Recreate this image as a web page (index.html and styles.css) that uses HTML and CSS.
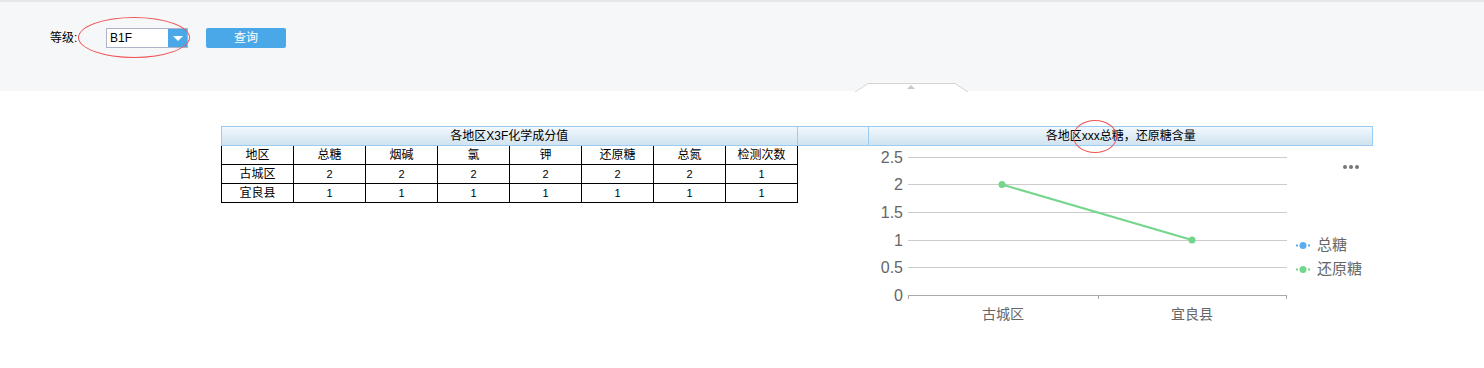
FILE: index.html
```html
<!DOCTYPE html>
<html lang="zh">
	<head>
		<meta charset="UTF-8" />
		<title>化学成分</title>
		<link rel="stylesheet" href="styles.css">
	</head>
	<body>
		<div class="query">
			<form action="" class="query-form">
				<label for="level">等级:</label>
				<div class="select">
					<span class="select-text">B1F</span>
					<span class="select-btn"></span>
				</div>
				<button type="button" class="btn">查询</button>
			</form>
			<span class="mark mark-select"></span>
			<svg class="toggle" width="116" height="10" viewBox="0 0 116 10">
				<path d="M1 10 L14 1.5 L101 1.5 L114 10" fill="#fff" stroke="#d4d4d4" stroke-width="1"/>
				<path d="M53 7 L57 3 L61 7 Z" fill="#c8c8c8"/>
			</svg>
		</div>
		<div class="content">
			<div class="titles">
				<div class="title t-table">各地区X3F化学成分值</div>
				<div class="title t-blank"></div>
				<div class="title t-chart">各地区xxx总糖，还原糖含量</div>
				<span class="mark mark-title"></span>
			</div>
			<div class="body">
				<table class="data">
					<tr><td>地区</td><td>总糖</td><td>烟碱</td><td>氯</td><td>钾</td><td>还原糖</td><td>总氮</td><td>检测次数</td></tr>
					<tr><td>古城区</td><td class="num">2</td><td class="num">2</td><td class="num">2</td><td class="num">2</td><td class="num">2</td><td class="num">2</td><td class="num">1</td></tr>
					<tr><td>宜良县</td><td class="num">1</td><td class="num">1</td><td class="num">1</td><td class="num">1</td><td class="num">1</td><td class="num">1</td><td class="num">1</td></tr>
				</table>
				<svg class="chart" width="504" height="190" viewBox="0 0 504 190">
					<g stroke="#ccc" stroke-width="1">
						<line x1="39" y1="11.5" x2="418" y2="11.5"/>
						<line x1="39" y1="38.5" x2="418" y2="38.5"/>
						<line x1="39" y1="66.5" x2="418" y2="66.5"/>
						<line x1="39" y1="94.5" x2="418" y2="94.5"/>
						<line x1="39" y1="121.5" x2="418" y2="121.5"/>
					</g>
					<g stroke="#aaa" stroke-width="1">
						<line x1="39" y1="149.5" x2="418" y2="149.5"/>
						<line x1="39.5" y1="149" x2="39.5" y2="153"/>
						<line x1="229.5" y1="149" x2="229.5" y2="153"/>
						<line x1="417.5" y1="149" x2="417.5" y2="153"/>
					</g>
					<g class="axis-y" text-anchor="end">
						<text x="34" y="17">2.5</text>
						<text x="34" y="44">2</text>
						<text x="34" y="72">1.5</text>
						<text x="34" y="100">1</text>
						<text x="34" y="127">0.5</text>
						<text x="34" y="155">0</text>
					</g>
					<g class="axis-x" text-anchor="middle">
						<text x="134" y="173">古城区</text>
						<text x="323" y="173">宜良县</text>
					</g>
					<polyline points="133,38.5 323,94" fill="none" stroke="#74d68c" stroke-width="2"/>
					<circle cx="133" cy="38.5" r="3.5" fill="#74d68c"/>
					<circle cx="323" cy="94" r="3.5" fill="#74d68c"/>
					<g fill="#777">
						<circle cx="476" cy="21" r="2"/>
						<circle cx="482" cy="21" r="2"/>
						<circle cx="488" cy="21" r="2"/>
					</g>
					<g class="legend">
						<line x1="427" y1="99.5" x2="441" y2="99.5" stroke="#5aaef0" stroke-width="2" stroke-dasharray="2 2"/>
						<circle cx="434" cy="99.5" r="3.5" fill="#5aaef0"/>
						<text x="448" y="104">总糖</text>
						<line x1="427" y1="123.5" x2="441" y2="123.5" stroke="#74d68c" stroke-width="2" stroke-dasharray="2 2"/>
						<circle cx="434" cy="123.5" r="3.5" fill="#74d68c"/>
						<text x="448" y="128">还原糖</text>
					</g>
				</svg>
			</div>
		</div>
	</body>
</html>
```

FILE: styles.css
```css
body{
	margin: 0;
	font: 12px/1.5 "Liberation Sans", "Noto Sans CJK SC", sans-serif;
	color: #000;
	background: #fff;
}
div.query{
	position: relative;
	height: 89px;
	border-top: 2px solid #e6e7eb;
	background: #f6f7f9;
}
form.query-form{
	display: flex;
	align-items: center;
	padding: 26px 0 0 50px;
}
form.query-form label{
	width: 56px;
}
div.select{
	display: flex;
	width: 80px;
	height: 18px;
	border: 1px solid #aeb3c8;
	background: #fff;
}
span.select-text{
	flex: 1;
	padding-left: 3px;
	line-height: 18px;
}
span.select-btn{
	position: relative;
	width: 19px;
	background: #4aa8e8;
}
span.select-btn:after{
	content: "";
	position: absolute;
	left: 5px;
	top: 7px;
	border: 5px solid transparent;
	border-top: 5px solid #fff;
	border-bottom: 0;
}
button.btn{
	margin-left: 18px;
	width: 80px;
	height: 20px;
	padding: 0;
	border: 0;
	border-radius: 2px;
	background: #4aa8e8;
	color: #fff;
	font: inherit;
	line-height: 20px;
}
span.mark{
	position: absolute;
	border: 1px solid #ee5555;
	border-radius: 50%;
}
span.mark-select{
	left: 78px;
	top: 15px;
	width: 110px;
	height: 39px;
}
svg.toggle{
	position: absolute;
	left: 854px;
	bottom: -1px;
}
div.content{
	width: 1152px;
	margin: 35px 0 0 221px;
}
div.titles{
	position: relative;
	display: flex;
	height: 20px;
}
div.title{
	height: 18px;
	border: 1px solid #9ccbf1;
	border-right: 0;
	background: linear-gradient(#f2f8fd, #cfe3f0);
	text-align: center;
	line-height: 18px;
}
div.t-table{
	width: 575px;
}
div.t-blank{
	width: 71px;
}
div.t-chart{
	width: 503px;
	border-right: 1px solid #9ccbf1;
}
span.mark-title{
	left: 852px;
	top: -6px;
	width: 42px;
	height: 31px;
}
div.body{
	display: flex;
	justify-content: space-between;
}
table.data{
	border-collapse: collapse;
	align-self: flex-start;
}
table.data td{
	width: 71px;
	height: 18px;
	padding: 0;
	border: 1px solid #000;
	text-align: center;
	line-height: 18px;
}
table.data tr:first-child td{
	border-top: 0;
}
table.data td.num{
	font-size: 11px;
}
svg.chart{
	display: block;
	font-family: "Liberation Sans", "Noto Sans CJK SC", sans-serif;
}
g.axis-y text{
	font-size: 16px;
	fill: #666;
}
g.axis-x text{
	font-size: 14px;
	fill: #666;
}
g.legend text{
	font-size: 15px;
	fill: #666;
}
```
